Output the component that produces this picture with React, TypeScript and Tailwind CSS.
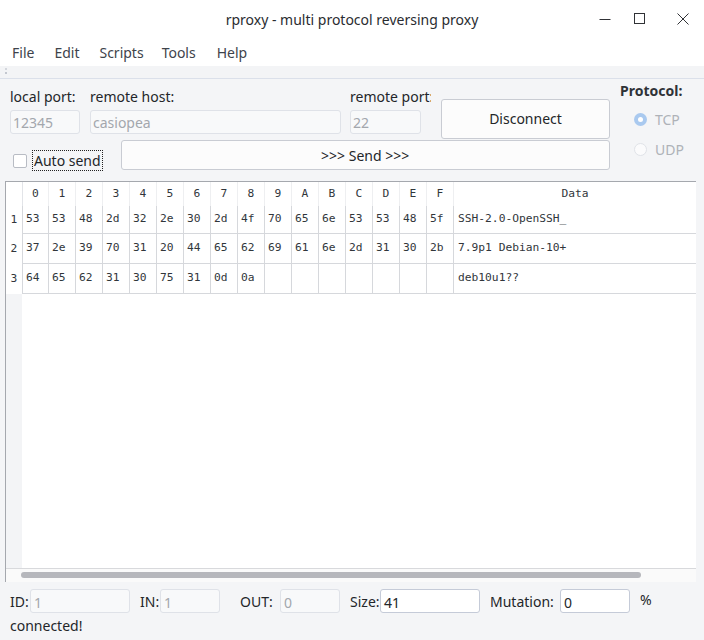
const rows = [
  {
    hex: ["53", "53", "48", "2d", "32", "2e", "30", "2d", "4f", "70", "65", "6e", "53", "53", "48", "5f"],
    data: "SSH-2.0-OpenSSH_",
  },
  {
    hex: ["37", "2e", "39", "70", "31", "20", "44", "65", "62", "69", "61", "6e", "2d", "31", "30", "2b"],
    data: "7.9p1 Debian-10+",
  },
  {
    hex: ["64", "65", "62", "31", "30", "75", "31", "0d", "0a", "", "", "", "", "", "", ""],
    data: "deb10u1??",
  },
]

const cols = ["0", "1", "2", "3", "4", "5", "6", "7", "8", "9", "A", "B", "C", "D", "E", "F"]

const Field = ({
  label,
  labelW,
  inputW,
  value,
  enabled,
}: {
  label: string
  labelW: string
  inputW: string
  value: string
  enabled?: boolean
}) => (
  <div className="flex items-center">
    <span className={`${labelW} text-[14px] text-[#232629]`}>{label}</span>
    <div
      className={`${inputW} flex h-[24px] items-center rounded-[3px] border px-[3px] pt-[3px] text-[14px] ${
        enabled
          ? "border-[#c5cbd8] bg-white text-[#232629]"
          : "border-[#dfe2e8] bg-[#f8f9fa] text-[#a3a7ad]"
      }`}
    >
      {value}
    </div>
  </div>
)

export default function App() {
  return (
    <div className="flex h-[640px] w-[704px] flex-col overflow-hidden bg-[#f4f5f7] font-['Noto_Sans',sans-serif] text-[#232629]">
      {/* title bar */}
      <div className="grid h-[38px] grid-cols-[1fr_auto_1fr] items-center bg-white">
        <div />
        <div className="text-[14px] text-[#2a2c30]">rproxy - multi protocol reversing proxy</div>
        <div className="flex items-center justify-end">
          <svg width="12" height="12" viewBox="0 0 12 12" className="mr-[23px]">
            <path d="M0.5 6.5h11" stroke="#303236" strokeWidth="1" />
          </svg>
          <svg width="12" height="12" viewBox="0 0 12 12" className="mr-[31px]">
            <rect x="0.5" y="0.5" width="10" height="10" fill="none" stroke="#303236" strokeWidth="1" />
          </svg>
          <svg width="12" height="12" viewBox="0 0 12 12" className="mr-[15px]">
            <path d="M0.5 0.5l11 11M11.5 0.5l-11 11" stroke="#303236" strokeWidth="1" />
          </svg>
        </div>
      </div>

      {/* menu bar */}
      <div className="flex h-[28px] items-center bg-white pl-[12px] text-[14px] text-[#3e434b]">
        <span>File</span>
        <span className="ml-[20px]">Edit</span>
        <span className="ml-[20px]">Scripts</span>
        <span className="ml-[18px]">Tools</span>
        <span className="ml-[21px]">Help</span>
      </div>

      {/* toolbar strip */}
      <div className="flex h-[13px] flex-col gap-[2px] border-b border-[#dbe0ea] bg-[#f3f4f6] pl-[5px] pt-[2px]">
        <div className="h-[2px] w-[2px] bg-[#d3d6dc]" />
        <div className="h-[2px] w-[2px] bg-[#c3c7cf]" />
      </div>

      {/* controls */}
      <div className="flex pl-[10px] pt-[8px]">
        <div className="flex w-[600px] flex-col">
          <div className="flex items-start">
            <div className="flex w-[70px] flex-col">
              <span className="h-[20px] text-[14px] leading-[20px]">local port:</span>
              <div className="mt-[3px] flex h-[24px] items-center rounded-[3px] border border-[#dfe2e8] bg-[#f8f9fa] px-[2px] text-[14px] text-[#a3a7ad]">
                12345
              </div>
            </div>
            <div className="ml-[10px] flex w-[251px] flex-col">
              <span className="h-[20px] text-[14px] leading-[20px]">remote host:</span>
              <div className="mt-[3px] flex h-[24px] items-center rounded-[3px] border border-[#dfe2e8] bg-[#f8f9fa] px-[2px] text-[14px] text-[#a3a7ad]">
                casiopea
              </div>
            </div>
            <div className="ml-[9px] flex w-[81px] flex-col">
              <span className="h-[20px] overflow-hidden whitespace-nowrap text-[14px] leading-[20px]">
                remote port:
              </span>
              <div className="mt-[3px] flex h-[24px] w-[71px] items-center rounded-[3px] border border-[#dfe2e8] bg-[#f8f9fa] px-[2px] text-[14px] text-[#a3a7ad]">
                22
              </div>
            </div>
            <button className="ml-[10px] mt-[12px] h-[40px] w-[169px] rounded-[3px] border border-[#c9ccd3] bg-[#fcfcfc] pb-[2px] text-[14px] text-[#232629]">
              Disconnect
            </button>
          </div>
          <div className="flex items-start">
            <div className="ml-[3px] mt-[11px] flex items-center">
              <div className="h-[14px] w-[14px] rounded-[2px] border border-[#b8bcc4] bg-white" />
              <span className="ml-[5px] h-[21px] border border-dotted border-[#222] px-[1px] text-[14px] leading-[19px]">
                Auto send
              </span>
            </div>
            <button className="ml-[18px] mt-[1px] h-[30px] w-[489px] rounded-[3px] border border-[#c9ccd3] bg-[#fcfcfc] text-[14px] text-[#232629]">
              &gt;&gt;&gt; Send &gt;&gt;&gt;
            </button>
          </div>
        </div>

        <div className="ml-[10px] -mt-[6px] flex flex-col">
          <span className="h-[20px] text-[14px] font-bold leading-[20px] text-[#2f3237]">Protocol:</span>
          <div className="ml-[14px] mt-[8px] flex h-[20px] items-center">
            <div className="flex h-[13px] w-[13px] items-center justify-center rounded-full bg-[#a9c9ef]">
              <div className="h-[5px] w-[5px] rounded-full bg-white" />
            </div>
            <span className="ml-[8px] text-[14px] text-[#aeb2b8]">TCP</span>
          </div>
          <div className="ml-[14px] mt-[10px] flex h-[20px] items-center">
            <div className="h-[13px] w-[13px] rounded-full border border-[#e0e3e8] bg-[#fbfbfc]" />
            <span className="ml-[8px] text-[14px] text-[#aeb2b8]">UDP</span>
          </div>
        </div>
      </div>

      {/* hex table */}
      <div className="ml-[5px] mt-[10px] flex h-[401px] w-[691px] flex-col border-l border-t border-[#a5a8ae] bg-white font-['DejaVu_Sans_Mono',monospace] text-[11.25px] text-[#31363b]">
        <div className="grid grid-cols-[17px_26px_repeat(15,27px)_1fr]">
          <div className="h-[24px] border-r border-[#e2e4e8]" />
          {cols.map((c) => (
            <div
              className="flex h-[24px] items-center justify-center border-r border-[#eeeff1]"
              key={c}
            >
              {c}
            </div>
          ))}
          <div className="flex h-[24px] items-center justify-center">Data</div>

          {rows.map((r, i) => {
            const h = i === 0 ? "h-[28px]" : "h-[30px]"
            return (
              <div className="contents" key={i}>
                <div className={`flex ${h} items-center justify-center border-r border-[#d6d8dc]`}>
                  {i + 1}
                </div>
                {r.hex.map((v, j) => (
                  <div
                    className={`flex ${h} items-center border-b border-r border-[#d6d8dc] pl-[3px]`}
                    key={j}
                  >
                    {v}
                  </div>
                ))}
                <div className={`flex ${h} items-center border-b border-[#d6d8dc] pl-[4px]`}>{r.data}</div>
              </div>
            )
          })}
        </div>
        <div className="flex flex-1">
          <div className="w-[16px] bg-[#f3f4f6]" />
        </div>
        <div className="h-[14px] border-t border-[#d8d9dc] bg-[#fafafa] pl-[15px] pt-[3px]">
          <div className="h-[6px] w-[620px] rounded-full bg-[#b6b7bc]" />
        </div>
      </div>

      {/* status fields */}
      <div className="ml-[10px] mt-[7px] flex items-center">
        <Field label="ID:" labelW="w-[20px]" inputW="w-[100px]" value="1" />
        <div className="ml-[10px]">
          <Field label="IN:" labelW="w-[20px]" inputW="w-[60px]" value="1" />
        </div>
        <div className="ml-[20px]">
          <Field label="OUT:" labelW="w-[40px]" inputW="w-[60px]" value="0" />
        </div>
        <div className="ml-[10px]">
          <Field label="Size:" labelW="w-[30px]" inputW="w-[100px]" value="41" enabled />
        </div>
        <div className="ml-[10px]">
          <Field label="Mutation:" labelW="w-[70px]" inputW="w-[70px]" value="0" enabled />
        </div>
        <span className="ml-[10px] -mt-[4px] text-[14px]">%</span>
      </div>
      <div className="ml-[10px] mt-[3px] h-[20px] text-[14px] leading-[20px]">connected!</div>
    </div>
  )
}
